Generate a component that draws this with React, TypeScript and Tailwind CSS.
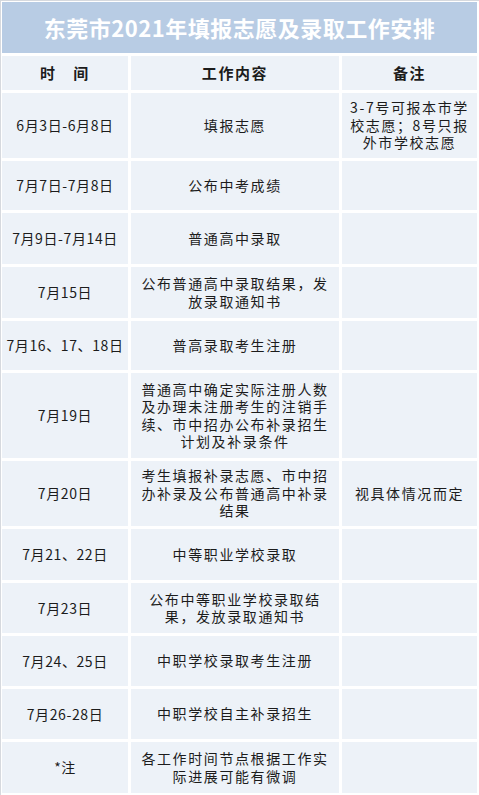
import React from "react";

type Row = {
  h: string;
  date: string;
  work: string[];
  note?: string[];
};

const ROWS: Row[] = [
  { h: "h-[65px]", date: "6月3日-6月8日", work: ["填报志愿"], note: ["3-7号可报本市学", "校志愿；8号只报", "外市学校志愿"] },
  { h: "h-[49px]", date: "7月7日-7月8日", work: ["公布中考成绩"] },
  { h: "h-[51px]", date: "7月9日-7月14日", work: ["普通高中录取"] },
  { h: "h-[51px]", date: "7月15日", work: ["公布普通高中录取结果，发", "放录取通知书"] },
  { h: "h-[49px]", date: "7月16、17、18日", work: ["普高录取考生注册"] },
  {
    h: "h-[85px]",
    date: "7月19日",
    work: ["普通高中确定实际注册人数", "及办理未注册考生的注销手", "续、市中招办公布补录招生", "计划及补录条件"],
  },
  {
    h: "h-[65px]",
    date: "7月20日",
    work: ["考生填报补录志愿、市中招", "办补录及公布普通高中补录", "结果"],
    note: ["视具体情况而定"],
  },
  { h: "h-[51px]", date: "7月21、22日", work: ["中等职业学校录取"] },
  { h: "h-[50px]", date: "7月23日", work: ["公布中等职业学校录取结", "果，发放录取通知书"] },
  { h: "h-[50px]", date: "7月24、25日", work: ["中职学校录取考生注册"] },
  { h: "h-[50px]", date: "7月26-28日", work: ["中职学校自主补录招生"] },
  { h: "h-[51px]", date: "*注", work: ["各工作时间节点根据工作实", "际进展可能有微调"] },
];

function Lines({ lines }: { lines: string[] }) {
  return (
    <div className="text-center leading-[17.5px]">
      {lines.map((l, i) => (
        <div key={i} className="whitespace-nowrap">
          {l}
        </div>
      ))}
    </div>
  );
}

export default function App() {
  const cell = "flex items-center justify-center bg-[#edf2f8]";
  return (
    <div
      className="w-[479px] h-[795px] bg-white border-l border-t border-[#d6d9de] pt-px pl-px pr-[2px] text-[14px] tracking-[1.6px] text-[#1c1c1c]"
      style={{ fontFamily: '"Noto Sans CJK SC", "Noto Sans", sans-serif' }}
    >
      <div className="grid grid-cols-[126px_208px_135px] gap-[3px]">
        <div className="col-span-3 flex h-[51px] items-center justify-center bg-[#b8cce4] text-[22px] font-bold tracking-[0.5px] text-white">
          东莞市2021年填报志愿及录取工作安排
        </div>
        <div className={`${cell} h-[34px] text-[15px] font-bold`}>时　间</div>
        <div className={`${cell} h-[34px] text-[15px] font-bold`}>工作内容</div>
        <div className={`${cell} h-[34px] text-[15px] font-bold`}>备注</div>
        {ROWS.map((r, i) => (
          <React.Fragment key={i}>
            <div className={`${cell} ${r.h} tracking-[0.6px]`}>{r.date}</div>
            <div className={`${cell} ${r.h}`}>
              <Lines lines={r.work} />
            </div>
            <div className={`${cell} ${r.h}`}>{r.note ? <Lines lines={r.note} /> : null}</div>
          </React.Fragment>
        ))}
      </div>
    </div>
  );
}
